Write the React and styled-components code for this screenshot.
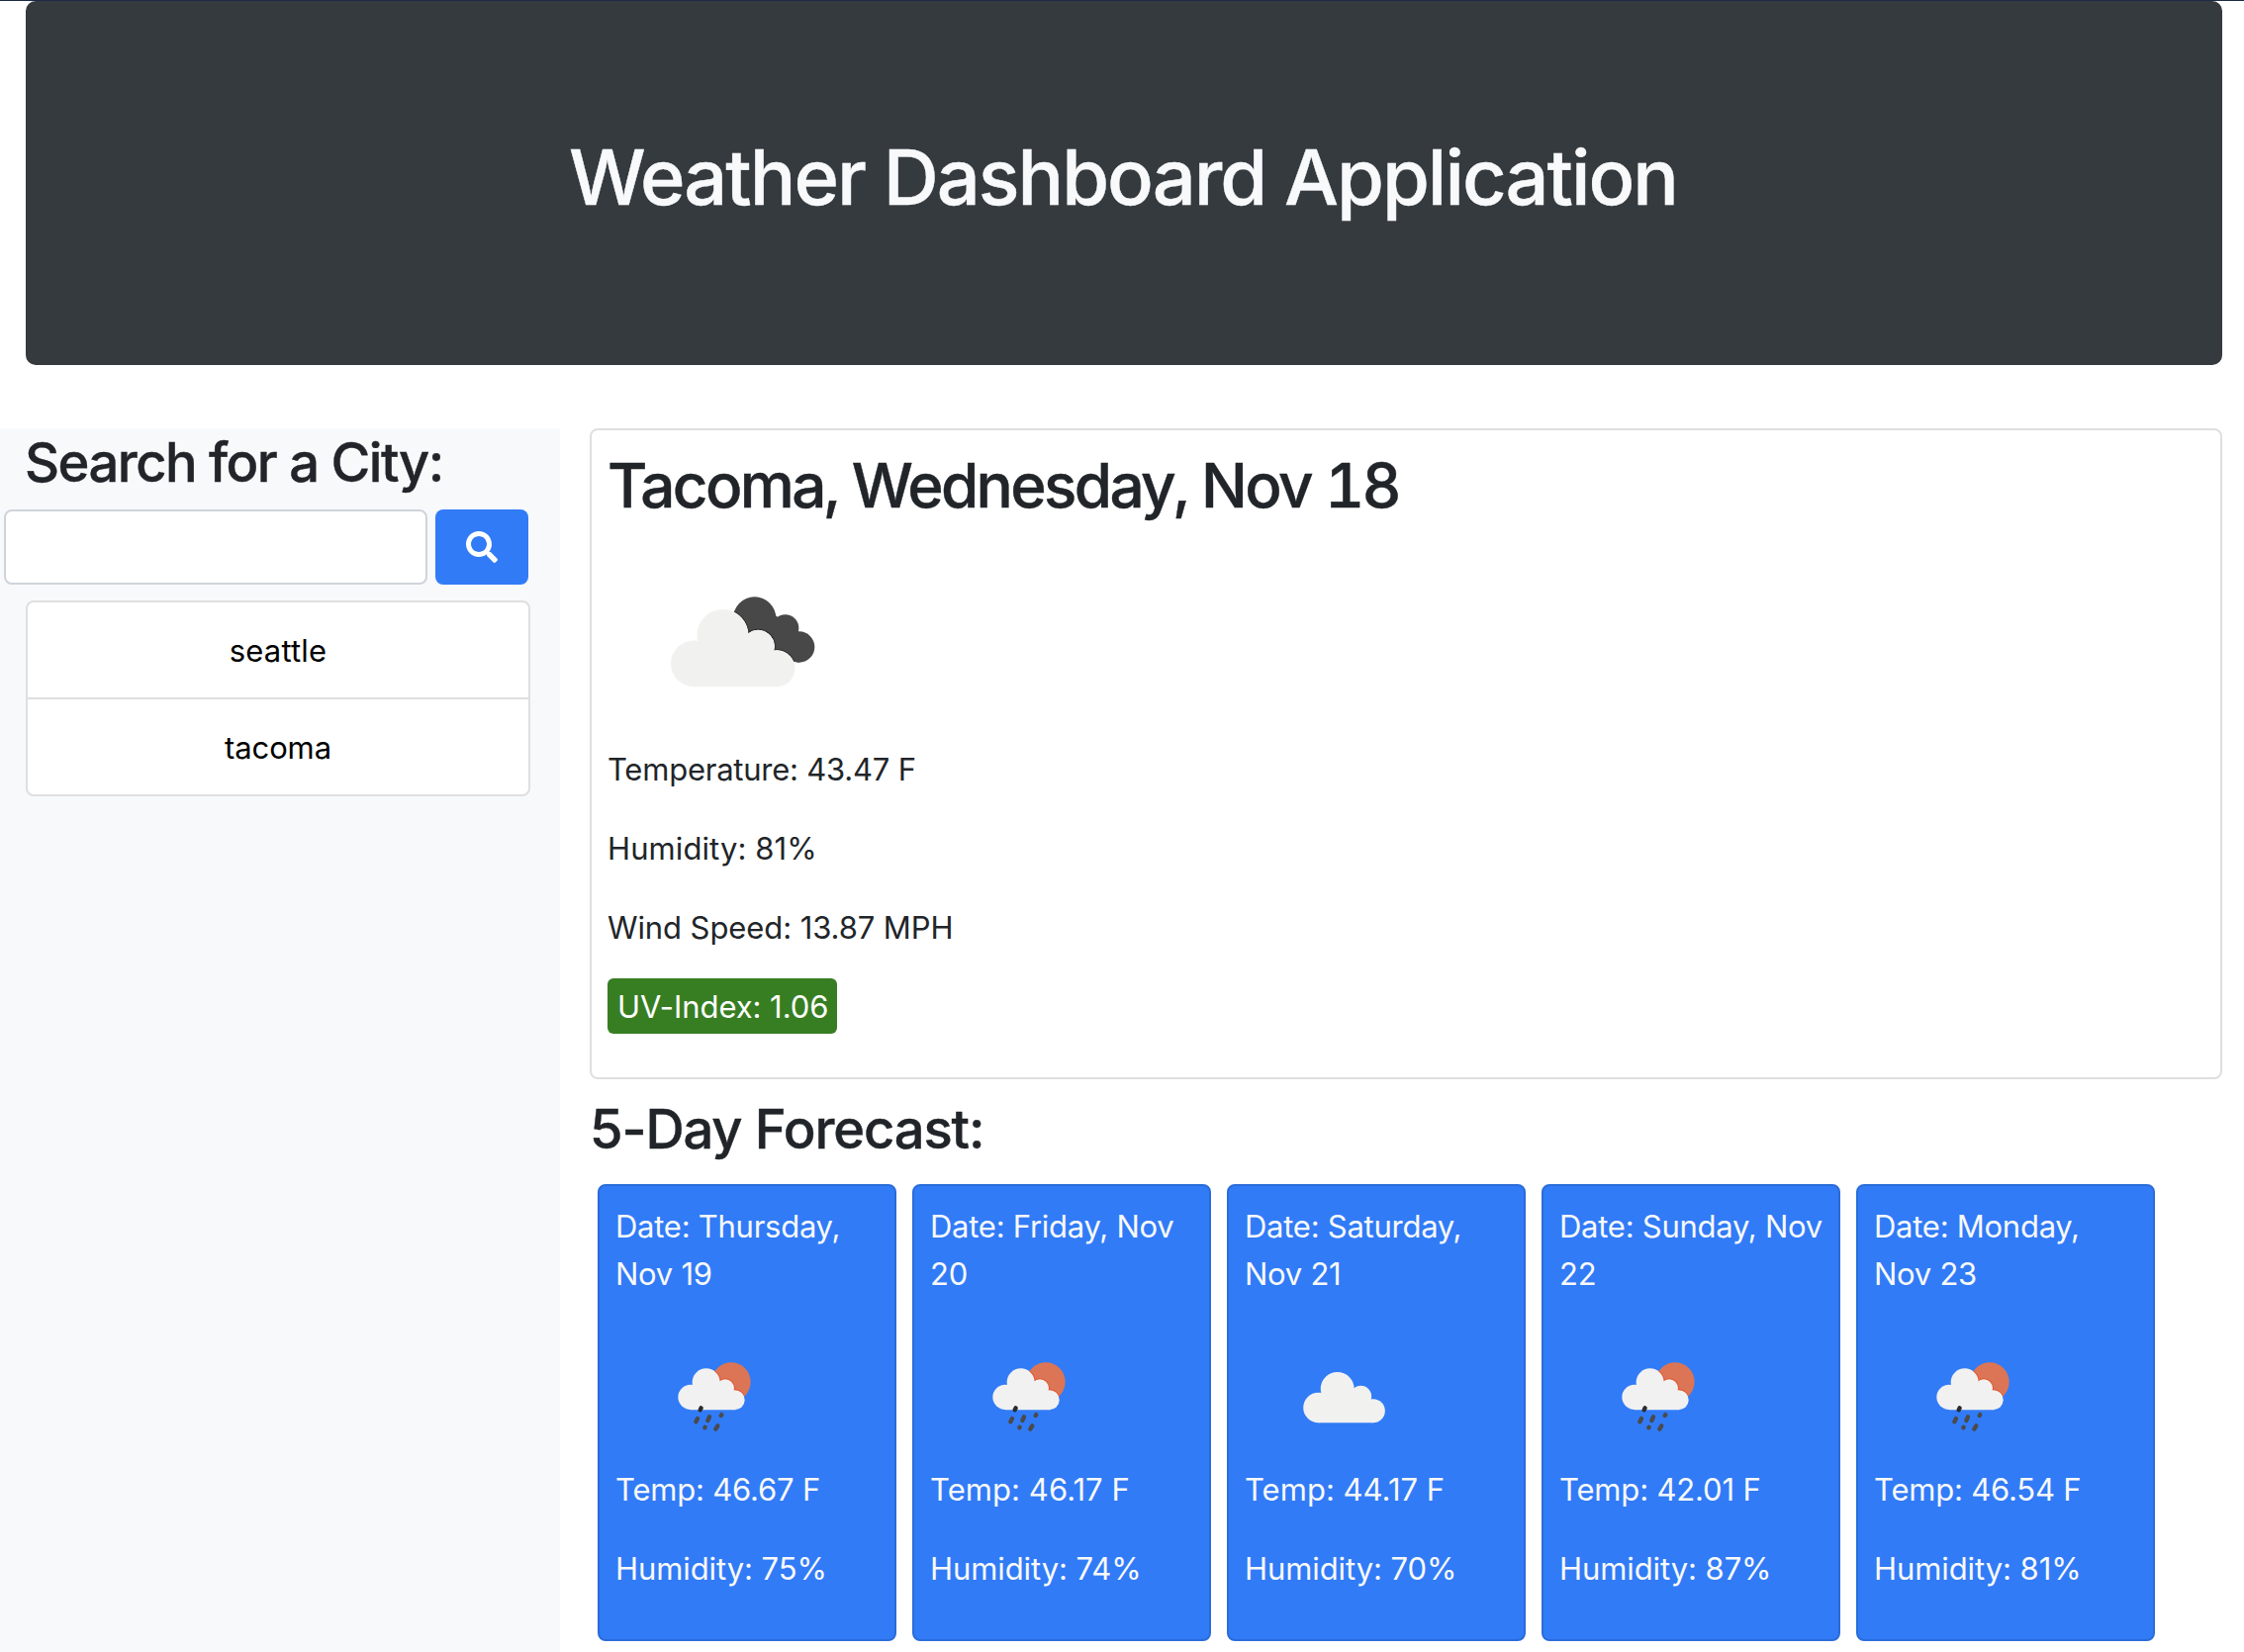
import React from "react";
import styled, { createGlobalStyle } from "styled-components";
import { FaSearch } from "react-icons/fa";

const GlobalStyle = createGlobalStyle`
  *, *::before, *::after { box-sizing: border-box; }
  html { overflow: hidden; }
  body {
    margin: 0;
    background: #fff;
    color: #212529;
    font-family: Inter, "Liberation Sans", sans-serif;
    font-size: 31px;
    line-height: 48px;
  }
  h1, h2, h3, p, ul { margin: 0; padding: 0; }
  h1, h2 { font-weight: 500; -webkit-text-stroke: 0.4px currentColor; }
`;

const Page = styled.div`
  display: flex;
  flex-direction: column;
  height: 1670px;
  border-top: 1px solid #1b2a45;
`;

const Header = styled.header`
  height: 368px;
  margin: 0 22px 64px 26px;
  padding-top: 130px;
  border-radius: 10px;
  background: #353a3f;
  color: #f8f9fa;
  text-align: center;
`;

const PageTitle = styled.h1`
  padding-right: 2px;
  font-size: 77.6px;
  line-height: 96px;
  letter-spacing: -2.01px;
`;

const Columns = styled.div`
  display: flex;
  flex: 1;
  min-height: 0;
`;

const Sidebar = styled.aside`
  width: 566px;
  flex: none;
  background: #f8f9fb;
`;

const SectionTitle = styled.h2`
  padding-top: 1px;
  font-size: 54.3px;
  line-height: 67px;
  letter-spacing: ${(p) => p.$tracking};
  white-space: nowrap;
`;

const SidebarTitle = styled(SectionTitle)`
  padding-left: 25px;
  margin-bottom: 14px;
`;

const SearchForm = styled.form`
  display: flex;
  gap: 8px;
  margin: 0 0 16px 4px;
`;

const SearchInput = styled.input`
  width: 428px;
  height: 76px;
  padding: 12px 24px;
  border: 2px solid #ced4da;
  border-radius: 8px;
  background: #fff;
  color: #495057;
  font: inherit;
  outline: none;
`;

const SearchButton = styled.button`
  display: flex;
  align-items: center;
  justify-content: center;
  width: 94px;
  height: 76px;
  padding: 0;
  border: 0;
  border-radius: 8px;
  background: #317bf7;
  color: #fff;
  font-size: 32px;
`;

const CityList = styled.ul`
  width: 510px;
  margin-left: 26px;
  border: 2px solid #dfdfdf;
  border-radius: 8px;
  background: #fff;
  list-style: none;
`;

const City = styled.li`
  padding: 25px 24px 23px;
  color: #000;
  text-align: center;
  letter-spacing: ${(p) => p.$tracking};

  & + & { border-top: 2px solid #dfdfdf; }
`;

const Main = styled.main`
  width: 1650px;
  margin-left: 30px;
`;

const Current = styled.section`
  height: 658px;
  margin-bottom: 16px;
  padding: 17px 16px 15px;
  border: 2px solid #dfdfdf;
  border-radius: 8px;
`;

const CurrentTitle = styled.h2`
  font-size: 62px;
  font-variant-numeric: tabular-nums;
  line-height: 77px;
  letter-spacing: -2.65px;
`;

const CurrentIcon = styled.svg`
  display: block;
  width: 180px;
  height: 120px;
  margin: 61px 0 44px 47px;
`;

const Reading = styled.p`
  margin-bottom: ${(p) => p.$gap};
  letter-spacing: ${(p) => p.$tracking};
`;

const UvBadge = styled.span`
  display: inline-block;
  margin-top: -5px;
  padding: 5px 9px 3px 10px;
  border-radius: 6px;
  background: #377e22;
  color: #fff;
`;

const Forecast = styled.div`
  display: flex;
  gap: 16px;
  margin: 22px 0 0 8px;
`;

const DayCard = styled.article`
  width: 302px;
  height: 462px;
  padding: 17px 13px 15px 16px;
  border: 2px solid #2a6cd9;
  border-radius: 8px;
  background: #317bf7;
  color: #f8f9fa;
`;

const DayDate = styled.p`
  letter-spacing: -0.26px;
`;

const DayIcon = styled.svg`
  display: block;
  width: 100px;
  height: 100px;
  margin: 48px 0 22px 48px;
`;

const CloudShape = () => (
  <>
    <circle cx="121" cy="242.5" r="69.5" />
    <circle cx="208" cy="156" r="77" />
    <circle cx="316" cy="190" r="48.5" />
    <circle cx="372" cy="257.5" r="54.5" />
    <path d="M121 312 L121 190 L200 140 L316 170 L372 230 L372 312 Z" />
  </>
);

const BrokenClouds = () => (
  <CurrentIcon viewBox="0 0 540 360">
    <g fill="#484849">
      <circle cx="305" cy="105" r="65" />
      <circle cx="398" cy="135" r="41" />
      <circle cx="440" cy="192" r="47" />
      <path d="M260 120 L360 90 L425 140 L440 239 L340 220 Z" />
    </g>
    <g fill="#2c2c2d" stroke="#2c2c2d" strokeWidth="8" clipPath="url(#darkCloud)">
      <CloudShape />
    </g>
    <clipPath id="darkCloud">
      <circle cx="305" cy="105" r="65" />
      <circle cx="398" cy="135" r="41" />
      <circle cx="440" cy="192" r="47" />
      <path d="M260 120 L360 90 L425 140 L440 239 L340 220 Z" />
    </clipPath>
    <g fill="#f1f1ef" stroke="#fbfbfa" strokeWidth="3">
      <CloudShape />
    </g>
    <g fill="#f1f1ef">
      <CloudShape />
    </g>
  </CurrentIcon>
);

const OvercastClouds = () => (
  <DayIcon viewBox="0 0 300 300">
    <g fill="#f1f1ef" transform="translate(-0.4 28.8) scale(0.661)">
      <CloudShape />
    </g>
  </DayIcon>
);

const RainySun = () => (
  <DayIcon viewBox="0 0 300 300">
    <circle cx="207" cy="111" r="59" fill="#dc7555" />
    <g fill="#e2562f" clipPath="url(#sunDisc)">
      <circle cx="131" cy="112" r="45" />
      <circle cx="189" cy="130" r="30" />
      <circle cx="218" cy="165.500" r="32.500" />
    </g>
    <clipPath id="sunDisc">
      <circle cx="207" cy="111" r="59" />
    </clipPath>
    <g fill="#f1f1f2">
      <circle cx="84" cy="157" r="38" />
      <circle cx="131" cy="112" r="42" />
      <circle cx="189" cy="130" r="27" />
      <circle cx="218" cy="165.500" r="30" />
      <path d="M84 195.500 L84 125 L131 100 L189 118 L218 150 L218 195.500 Z" />
    </g>
    <g stroke="#4a4a4b" strokeWidth="13" strokeLinecap="round">
      <path d="M116 190 L113 196" stroke="#2b2b2c" />
      <path d="M105 222 L100 232" />
      <path d="M141 217 L136 228" />
      <path d="M178 210.500 L176 213" />
      <path d="M128 248 L127 250" />
      <path d="M166 244 L160 254" />
    </g>
  </DayIcon>
);

const cities = [
  { name: "seattle", tracking: "0.2px" },
  { name: "tacoma", tracking: "-0.1px" },
];

const days = [
  { date: "Thursday, Nov 19", Icon: RainySun, temp: "46.67", humidity: 75, tracking: "-0.2px" },
  { date: "Friday, Nov 20", Icon: RainySun, temp: "46.17", humidity: 74, tracking: "0.06px" },
  { date: "Saturday, Nov 21", Icon: OvercastClouds, temp: "44.17", humidity: 70, tracking: "0.02px" },
  { date: "Sunday, Nov 22", Icon: RainySun, temp: "42.01", humidity: 87, tracking: "-0.16px" },
  { date: "Monday, Nov 23", Icon: RainySun, temp: "46.54", humidity: 81, tracking: "-0.2px" },
];

export default function App() {
  return (
    <>
      <GlobalStyle />
      <Page>
        <Header>
          <PageTitle>Weather Dashboard Application</PageTitle>
        </Header>
        <Columns>
          <Sidebar>
            <SidebarTitle $tracking="-1.54px">Search for a City:</SidebarTitle>
            <SearchForm onSubmit={(e) => e.preventDefault()}>
              <SearchInput type="text" aria-label="City" />
              <SearchButton type="submit" aria-label="Search">
                <FaSearch />
              </SearchButton>
            </SearchForm>
            <CityList>
              {cities.map((c) => (
                <City key={c.name} $tracking={c.tracking}>{c.name}</City>
              ))}
            </CityList>
          </Sidebar>
          <Main>
            <Current>
              <CurrentTitle>Tacoma, Wednesday, Nov 18</CurrentTitle>
              <BrokenClouds />
              <Reading $gap="32px" $tracking="-0.23px">Temperature: 43.47 F</Reading>
              <Reading $gap="32px" $tracking="0.1px">Humidity: 81%</Reading>
              <Reading $gap="32px" $tracking="-0.09px">Wind Speed: 13.87 MPH</Reading>
              <Reading $gap="0" $tracking="-0.06px">
                <UvBadge>UV-Index: 1.06</UvBadge>
              </Reading>
            </Current>
            <SectionTitle $tracking="-1.12px">5-Day Forecast:</SectionTitle>
            <Forecast>
              {days.map(({ date, Icon, temp, humidity, tracking }) => (
                <DayCard key={date}>
                  <DayDate>{`Date: ${date}`}</DayDate>
                  <Icon />
                  <Reading $gap="32px" $tracking={tracking}>{`Temp: ${temp} F`}</Reading>
                  <Reading $gap="0" $tracking="-0.08px">{`Humidity: ${humidity}%`}</Reading>
                </DayCard>
              ))}
            </Forecast>
          </Main>
        </Columns>
      </Page>
    </>
  );
}
